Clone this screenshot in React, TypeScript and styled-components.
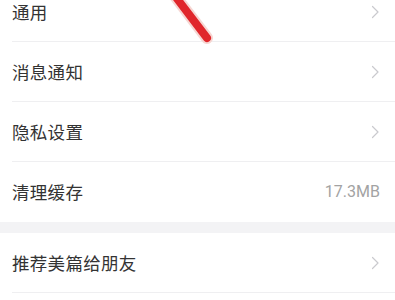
import React from "react";
import styled, { createGlobalStyle } from "styled-components";

const GlobalStyle = createGlobalStyle`
    html, body {
        margin: 0;
        padding: 0;
        background: #ffffff;
    }
    body {
        font-family: "Noto Sans CJK SC", "Noto Sans", sans-serif;
        overflow: hidden;
    }
`;

const Page = styled.div`
    position: relative;
    width: 395px;
    height: 300px;
    overflow: hidden;
    background: #ffffff;
`;

const List = styled.div`
    margin-top: -18px;
`;

const Group = styled.div`
    background: #ffffff;
`;

const Row = styled.div<{ $last?: boolean }>`
    display: flex;
    align-items: center;
    justify-content: space-between;
    height: 59px;
    margin-left: 12px;
    padding-right: 15px;
    border-bottom: 1px solid ${(p) => (p.$last ? "transparent" : "#efeff1")};
`;

const Label = styled.span`
    font-size: 17.5px;
    color: #333333;
    letter-spacing: 0.3px;
`;

const Value = styled.span`
    font-family: "Roboto", "Noto Sans", sans-serif;
    font-size: 16px;
    color: #a3a3a3;
`;

const Divider = styled.div`
    height: 11px;
    background: #f3f3f5;
`;

const Mark = styled.svg`
    position: absolute;
    left: 0;
    top: 0;
    pointer-events: none;
`;

const Chevron = () => (
    <svg width="9" height="14" viewBox="0 0 9 14">
        <polyline
            points="1.5,1.5 7,7 1.5,12.5"
            fill="none"
            stroke="#cacace"
            strokeWidth="1.2"
            strokeLinecap="round"
            strokeLinejoin="round"
        />
    </svg>
);

interface IItem {
    label: string;
    value?: string;
}

const groups: IItem[][] = [
    [
        { label: "通用" },
        { label: "消息通知" },
        { label: "隐私设置" },
        { label: "清理缓存", value: "17.3MB" }
    ],
    [{ label: "推荐美篇给朋友" }]
];

const App: React.FunctionComponent = () => {
    return (
        <Page>
            <GlobalStyle />
            <List>
                {groups.map((group, gi) => (
                    <React.Fragment key={gi}>
                        {gi > 0 && <Divider />}
                        <Group>
                            {group.map((item, i) => (
                                <Row key={i} $last={gi === 0 && i === group.length - 1}>
                                    <Label>{item.label}</Label>
                                    {item.value ? <Value>{item.value}</Value> : <Chevron />}
                                </Row>
                            ))}
                        </Group>
                    </React.Fragment>
                ))}
            </List>
            <Mark width="395" height="300">
                <line x1="172" y1="-8" x2="207" y2="38" stroke="#f6d6d2" strokeWidth="12" strokeLinecap="round" />
                <line x1="172" y1="-8" x2="207" y2="38" stroke="#e0262b" strokeWidth="8" strokeLinecap="round" />
            </Mark>
        </Page>
    );
};

export default App;
